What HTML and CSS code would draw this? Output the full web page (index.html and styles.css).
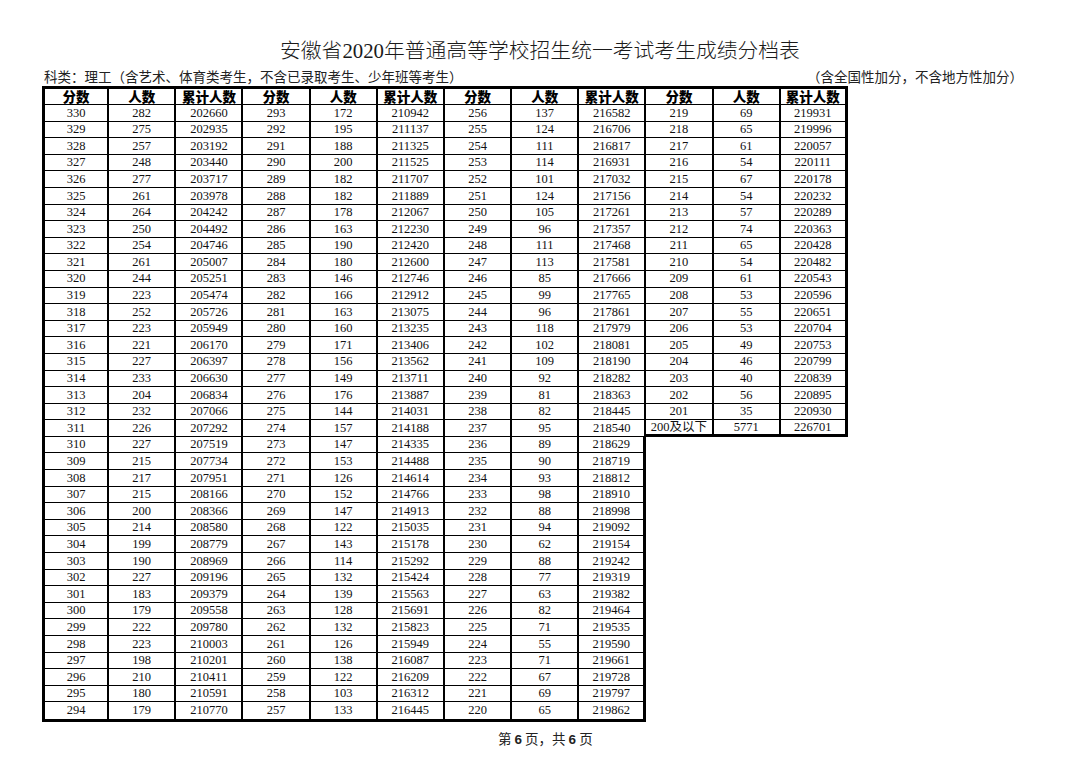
FILE: index.html
```html
<!DOCTYPE html>
<html lang="zh-CN">
<head>
<meta charset="utf-8">
<title>安徽省2020年普通高等学校招生统一考试考生成绩分档表</title>
<link rel="stylesheet" href="styles.css">
</head>
<body>
<div class="page">
  <div class="title">安徽省2020年普通高等学校招生统一考试考生成绩分档表</div>
  <div class="sub"><span>科类：理工（含艺术、体育类考生，不含已录取考生、少年班等考生）</span><span>（含全国性加分，不含地方性加分）</span></div>
  <div class="sheet">
    <div class="row h"><span>分数</span><span>人数</span><span>累计人数</span><span>分数</span><span>人数</span><span>累计人数</span><span>分数</span><span>人数</span><span>累计人数</span><span>分数</span><span>人数</span><span>累计人数</span></div>
    <div class="row"><span>330</span><span>282</span><span>202660</span><span>293</span><span>172</span><span>210942</span><span>256</span><span>137</span><span>216582</span><span>219</span><span>69</span><span>219931</span></div>
    <div class="row"><span>329</span><span>275</span><span>202935</span><span>292</span><span>195</span><span>211137</span><span>255</span><span>124</span><span>216706</span><span>218</span><span>65</span><span>219996</span></div>
    <div class="row"><span>328</span><span>257</span><span>203192</span><span>291</span><span>188</span><span>211325</span><span>254</span><span>111</span><span>216817</span><span>217</span><span>61</span><span>220057</span></div>
    <div class="row"><span>327</span><span>248</span><span>203440</span><span>290</span><span>200</span><span>211525</span><span>253</span><span>114</span><span>216931</span><span>216</span><span>54</span><span>220111</span></div>
    <div class="row"><span>326</span><span>277</span><span>203717</span><span>289</span><span>182</span><span>211707</span><span>252</span><span>101</span><span>217032</span><span>215</span><span>67</span><span>220178</span></div>
    <div class="row"><span>325</span><span>261</span><span>203978</span><span>288</span><span>182</span><span>211889</span><span>251</span><span>124</span><span>217156</span><span>214</span><span>54</span><span>220232</span></div>
    <div class="row"><span>324</span><span>264</span><span>204242</span><span>287</span><span>178</span><span>212067</span><span>250</span><span>105</span><span>217261</span><span>213</span><span>57</span><span>220289</span></div>
    <div class="row"><span>323</span><span>250</span><span>204492</span><span>286</span><span>163</span><span>212230</span><span>249</span><span>96</span><span>217357</span><span>212</span><span>74</span><span>220363</span></div>
    <div class="row"><span>322</span><span>254</span><span>204746</span><span>285</span><span>190</span><span>212420</span><span>248</span><span>111</span><span>217468</span><span>211</span><span>65</span><span>220428</span></div>
    <div class="row"><span>321</span><span>261</span><span>205007</span><span>284</span><span>180</span><span>212600</span><span>247</span><span>113</span><span>217581</span><span>210</span><span>54</span><span>220482</span></div>
    <div class="row"><span>320</span><span>244</span><span>205251</span><span>283</span><span>146</span><span>212746</span><span>246</span><span>85</span><span>217666</span><span>209</span><span>61</span><span>220543</span></div>
    <div class="row"><span>319</span><span>223</span><span>205474</span><span>282</span><span>166</span><span>212912</span><span>245</span><span>99</span><span>217765</span><span>208</span><span>53</span><span>220596</span></div>
    <div class="row"><span>318</span><span>252</span><span>205726</span><span>281</span><span>163</span><span>213075</span><span>244</span><span>96</span><span>217861</span><span>207</span><span>55</span><span>220651</span></div>
    <div class="row"><span>317</span><span>223</span><span>205949</span><span>280</span><span>160</span><span>213235</span><span>243</span><span>118</span><span>217979</span><span>206</span><span>53</span><span>220704</span></div>
    <div class="row"><span>316</span><span>221</span><span>206170</span><span>279</span><span>171</span><span>213406</span><span>242</span><span>102</span><span>218081</span><span>205</span><span>49</span><span>220753</span></div>
    <div class="row"><span>315</span><span>227</span><span>206397</span><span>278</span><span>156</span><span>213562</span><span>241</span><span>109</span><span>218190</span><span>204</span><span>46</span><span>220799</span></div>
    <div class="row"><span>314</span><span>233</span><span>206630</span><span>277</span><span>149</span><span>213711</span><span>240</span><span>92</span><span>218282</span><span>203</span><span>40</span><span>220839</span></div>
    <div class="row"><span>313</span><span>204</span><span>206834</span><span>276</span><span>176</span><span>213887</span><span>239</span><span>81</span><span>218363</span><span>202</span><span>56</span><span>220895</span></div>
    <div class="row"><span>312</span><span>232</span><span>207066</span><span>275</span><span>144</span><span>214031</span><span>238</span><span>82</span><span>218445</span><span>201</span><span>35</span><span>220930</span></div>
    <div class="row x"><span>311</span><span>226</span><span>207292</span><span>274</span><span>157</span><span>214188</span><span>237</span><span>95</span><span>218540</span><span>200及以下</span><span>5771</span><span>226701</span></div>
    <div class="row"><span>310</span><span>227</span><span>207519</span><span>273</span><span>147</span><span>214335</span><span>236</span><span>89</span><span>218629</span></div>
    <div class="row"><span>309</span><span>215</span><span>207734</span><span>272</span><span>153</span><span>214488</span><span>235</span><span>90</span><span>218719</span></div>
    <div class="row"><span>308</span><span>217</span><span>207951</span><span>271</span><span>126</span><span>214614</span><span>234</span><span>93</span><span>218812</span></div>
    <div class="row"><span>307</span><span>215</span><span>208166</span><span>270</span><span>152</span><span>214766</span><span>233</span><span>98</span><span>218910</span></div>
    <div class="row"><span>306</span><span>200</span><span>208366</span><span>269</span><span>147</span><span>214913</span><span>232</span><span>88</span><span>218998</span></div>
    <div class="row"><span>305</span><span>214</span><span>208580</span><span>268</span><span>122</span><span>215035</span><span>231</span><span>94</span><span>219092</span></div>
    <div class="row"><span>304</span><span>199</span><span>208779</span><span>267</span><span>143</span><span>215178</span><span>230</span><span>62</span><span>219154</span></div>
    <div class="row"><span>303</span><span>190</span><span>208969</span><span>266</span><span>114</span><span>215292</span><span>229</span><span>88</span><span>219242</span></div>
    <div class="row"><span>302</span><span>227</span><span>209196</span><span>265</span><span>132</span><span>215424</span><span>228</span><span>77</span><span>219319</span></div>
    <div class="row"><span>301</span><span>183</span><span>209379</span><span>264</span><span>139</span><span>215563</span><span>227</span><span>63</span><span>219382</span></div>
    <div class="row"><span>300</span><span>179</span><span>209558</span><span>263</span><span>128</span><span>215691</span><span>226</span><span>82</span><span>219464</span></div>
    <div class="row"><span>299</span><span>222</span><span>209780</span><span>262</span><span>132</span><span>215823</span><span>225</span><span>71</span><span>219535</span></div>
    <div class="row"><span>298</span><span>223</span><span>210003</span><span>261</span><span>126</span><span>215949</span><span>224</span><span>55</span><span>219590</span></div>
    <div class="row"><span>297</span><span>198</span><span>210201</span><span>260</span><span>138</span><span>216087</span><span>223</span><span>71</span><span>219661</span></div>
    <div class="row"><span>296</span><span>210</span><span>210411</span><span>259</span><span>122</span><span>216209</span><span>222</span><span>67</span><span>219728</span></div>
    <div class="row"><span>295</span><span>180</span><span>210591</span><span>258</span><span>103</span><span>216312</span><span>221</span><span>69</span><span>219797</span></div>
    <div class="row last"><span>294</span><span>179</span><span>210770</span><span>257</span><span>133</span><span>216445</span><span>220</span><span>65</span><span>219862</span></div>
  </div>
  <div class="foot">第 <b>6</b> 页，共 <b>6</b> 页</div>
</div>
</body>
</html>
```

FILE: styles.css
```css
* {
  box-sizing: border-box;
  margin: 0;
  padding: 0;
}

body {
  background: #fff;
  width: 1068px;
  height: 760px;
  overflow: hidden;
  font-family: "Liberation Serif", "Noto Sans CJK SC", serif;
  color: #111;
}

.page {
  padding-top: 38px;
}

.title {
  padding-left: 280px;
  height: 26px;
  font-size: 20.8px;
  line-height: 26px;
  font-weight: 300;
  color: #1a1a1a;
  white-space: nowrap;
}

.sub {
  display: flex;
  justify-content: space-between;
  margin: 4px 45px 0 44px;
  height: 18px;
  font-family: "Noto Sans CJK SC", sans-serif;
  font-size: 13.5px;
  line-height: 16px;
  color: #222;
  white-space: nowrap;
}

.sheet {
  margin-left: 42px;
  width: 806px;
}

.row {
  display: flex;
  height: 16.6px;
}

.row.h {
  height: 19px;
}

.row.last {
  height: 19.6px;
}

.row span {
  flex: 0 0 67.1667px;
  display: flex;
  align-items: center;
  justify-content: center;
  border-right: 2px solid #000;
  border-bottom: 1px solid #000;
  font-size: 12.5px;
  line-height: 1;
  white-space: nowrap;
}

.row span:first-child {
  border-left: 3px solid #000;
}

.row span:last-child {
  border-right-width: 3px;
}

.row.h span {
  padding-top: 1px;
  border-top: 3px solid #000;
  font-family: "Noto Sans CJK SC", sans-serif;
  font-weight: 900;
  font-size: 13.5px;
  color: #000;
}

.row.last span {
  border-bottom-width: 3px;
}

.row.x span:nth-child(n+10) {
  border-bottom-width: 3px;
}

.foot {
  margin-top: 8px;
  padding-left: 498px;
  font-family: "Noto Sans CJK SC", sans-serif;
  font-size: 13.5px;
  line-height: 16px;
  color: #222;
  white-space: nowrap;
}

.foot b {
  font-family: "Liberation Sans", sans-serif;
  font-weight: 700;
}
```
